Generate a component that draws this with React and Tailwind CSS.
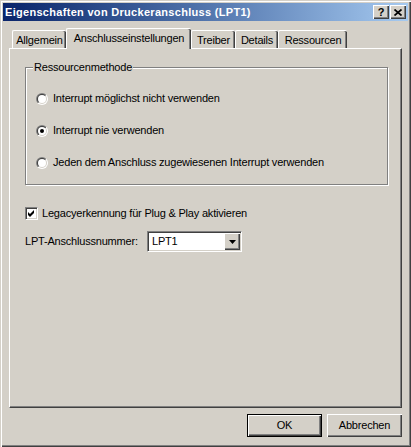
import React, { useState } from "react";

const raised =
  "shadow-[inset_1px_1px_#ffffff,inset_-1px_-1px_#404040,inset_-2px_-2px_#808080]";

function Radio({ checked, label, onClick }) {
  return (
    <div className="flex items-center h-[13px] gap-[5px] cursor-default" onClick={onClick}>
      <svg width="12" height="12" viewBox="0 0 12 12" className="shrink-0">
        <defs>
          <linearGradient id="rOut" x1="0" y1="0" x2="1" y2="1">
            <stop offset="50%" stopColor="#808080" />
            <stop offset="50%" stopColor="#ffffff" />
          </linearGradient>
          <linearGradient id="rIn" x1="0" y1="0" x2="1" y2="1">
            <stop offset="50%" stopColor="#404040" />
            <stop offset="50%" stopColor="#d4d0c8" />
          </linearGradient>
        </defs>
        <circle cx="6" cy="6" r="6" fill="url(#rOut)" />
        <circle cx="6" cy="6" r="5" fill="url(#rIn)" />
        <circle cx="6" cy="6" r="4" fill="#ffffff" />
        {checked && <circle cx="6" cy="6" r="2" fill="#000000" />}
      </svg>
      <span>{label}</span>
    </div>
  );
}

export default function App() {
  const [methode, setMethode] = useState(1);
  const [legacy, setLegacy] = useState(true);

  const tabs = [
    { name: "Allgemein", w: "w-[54px]" },
    { name: "Anschlusseinstellungen", w: "w-[125px]", active: true },
    { name: "Treiber", w: "w-[44px]" },
    { name: "Details", w: "w-[43px]" },
    { name: "Ressourcen", w: "w-[69px]" },
  ];

  const optionen = [
    "Interrupt möglichst nicht verwenden",
    "Interrupt nie verwenden",
    "Jeden dem Anschluss zugewiesenen Interrupt verwenden",
  ];

  return (
    <div className="w-[411px] h-[447px] bg-[#d4d0c8] p-[3px] flex flex-col text-black text-[11px] tracking-[-0.2px] leading-none font-['Liberation_Sans',Arial,sans-serif] shadow-[inset_1px_1px_#d4d0c8,inset_2px_2px_#ffffff,inset_-1px_-1px_#404040,inset_-2px_-2px_#808080]">
      {/* Titelleiste */}
      <div className="h-[18px] flex items-center justify-between pl-[2px] pr-[2px] bg-gradient-to-r from-[#0a246a] to-[#a6caf0]">
        <span className="text-white font-bold tracking-[0.3px]">
          Eigenschaften von Druckeranschluss (LPT1)
        </span>
        <div className="flex gap-[1px]">
          <div className={`w-[16px] h-[14px] bg-[#d4d0c8] flex items-center justify-center font-bold text-[11px] tracking-normal ${raised}`}>
            ?
          </div>
          <div className={`w-[16px] h-[14px] bg-[#d4d0c8] flex items-center justify-center ${raised}`}>
            <svg width="8" height="7" viewBox="0 0 8 7">
              <path d="M0.5 0.5 L7.5 6.5 M7.5 0.5 L0.5 6.5" stroke="#000" strokeWidth="1.7" />
            </svg>
          </div>
        </div>
      </div>

      {/* Reiter */}
      <div className="mt-[7px] h-[20px] flex items-end pl-[9px] relative z-10">
        {tabs.map((t) =>
          t.active ? (
            <div
              key={t.name}
              className={`${t.w} h-[21px] -mb-[1px] bg-[#d4d0c8] border-l border-t border-white rounded-tl-[2px] rounded-tr-[2px] shadow-[inset_-1px_0_#404040,inset_-2px_0_#808080] flex items-center justify-center pb-[2px]`}
            >
              {t.name}
            </div>
          ) : (
            <div
              key={t.name}
              className={`${t.w} h-[18px] bg-[#d4d0c8] border-l border-t border-white rounded-tl-[2px] rounded-tr-[2px] shadow-[inset_-1px_0_#404040,inset_-2px_0_#808080] flex items-center justify-center pt-[2px]`}
            >
              {t.name}
            </div>
          )
        )}
      </div>

      {/* Reiterseite */}
      <div className="ml-[6px] w-[393px] h-[360px] border-l border-t border-white border-r border-b border-r-[#404040] border-b-[#404040] shadow-[inset_-1px_-1px_#808080] pl-[15px] pt-[18px] flex flex-col">
        <div className="relative w-[363px] h-[118px] border border-[#808080] shadow-[1px_1px_#ffffff,inset_1px_1px_#ffffff] pt-[24px] pl-[10px] flex flex-col gap-[19px]">
          <span className="absolute left-[7px] -top-[6px] bg-[#d4d0c8] px-[1px]">
            Ressourcenmethode
          </span>
          {optionen.map((o, i) => (
            <Radio key={o} label={o} checked={methode === i} onClick={() => setMethode(i)} />
          ))}
        </div>

        <div className="mt-[22px] flex items-center h-[13px] gap-[4px]" onClick={() => setLegacy(!legacy)}>
          <div className="w-[13px] h-[13px] bg-white border border-t-[#808080] border-l-[#808080] border-r-white border-b-white shadow-[inset_1px_1px_#404040,inset_-1px_-1px_#d4d0c8] shrink-0">
            {legacy && (
              <svg width="11" height="11" viewBox="0 0 11 11" className="block">
                <path d="M2 4 L4 6 L8 2 L8 5 L4 9 L2 7 Z" fill="#000" />
              </svg>
            )}
          </div>
          <span>Legacyerkennung für Plug &amp; Play aktivieren</span>
        </div>

        <div className="mt-[11px] flex items-center h-[21px]">
          <span className="w-[122px]">LPT-Anschlussnummer:</span>
          <div className="w-[95px] h-[21px] bg-white border border-t-[#808080] border-l-[#808080] border-r-white border-b-white shadow-[inset_1px_1px_#404040,inset_-1px_-1px_#d4d0c8] p-[1px] flex items-center justify-between">
            <span className="ml-[3px]">LPT1</span>
            <div className={`w-[16px] h-[17px] bg-[#d4d0c8] flex items-center justify-center ${raised}`}>
              <svg width="7" height="4" viewBox="0 0 7 4">
                <path d="M0 0 L7 0 L3.5 4 Z" fill="#000" />
              </svg>
            </div>
          </div>
        </div>
      </div>

      {/* Schaltflächen */}
      <div className="mt-[6px] flex justify-end gap-[5px] pr-[6px]">
        <button className="w-[75px] h-[23px] bg-[#d4d0c8] border border-black shadow-[inset_1px_1px_#ffffff,inset_-1px_-1px_#404040,inset_-2px_-2px_#808080] flex items-center justify-center">
          OK
        </button>
        <button className={`w-[75px] h-[23px] bg-[#d4d0c8] flex items-center justify-center ${raised}`}>
          Abbrechen
        </button>
      </div>
    </div>
  );
}
